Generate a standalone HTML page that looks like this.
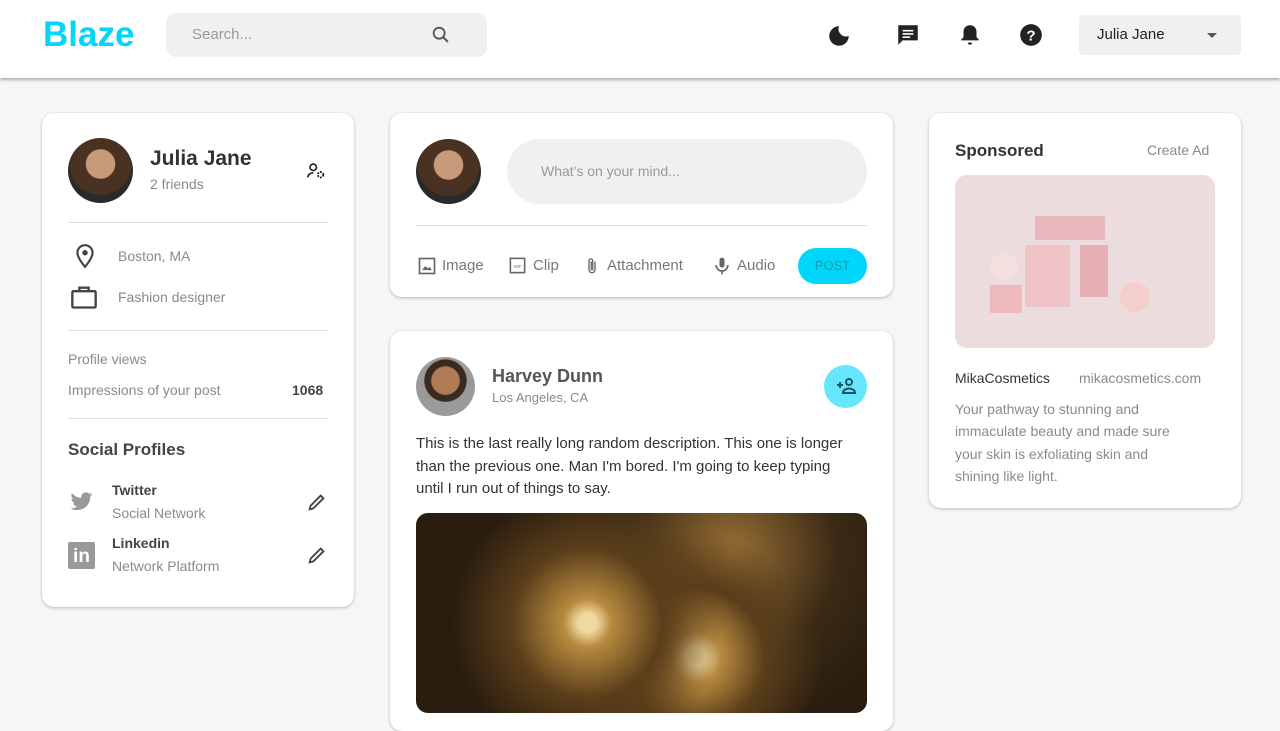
<!DOCTYPE html>
<html><head><meta charset="utf-8"><style>
*{box-sizing:border-box;margin:0;padding:0}
body{width:1280px;height:690px;overflow:hidden;background:#f6f6f6;font-family:"Liberation Sans",sans-serif;position:relative;color:#333}
.a{position:absolute}
.hdr{left:0;top:0;width:1280px;height:78px;background:#fff;box-shadow:0 2px 3px rgba(0,0,0,.3)}
.card{background:#fff;border-radius:12px;box-shadow:0 1px 3px rgba(0,0,0,.25)}
.g{color:#8a8a8a}
.hr{height:1px;background:#ddd}
.av{border-radius:50%}
</style></head><body>
<div class="a hdr"></div>
<div class="a" style="left:43px;top:15px;font-size:35px;font-weight:bold;color:#00d5fa">Blaze</div>
<div class="a" style="left:166px;top:13px;width:321px;height:44px;background:#f0f0f0;border-radius:10px"></div>
<div class="a g" style="left:192px;top:26px;font-size:15px;color:#999">Search...</div>
<svg class="a" style="left:430px;top:24px" width="22" height="22" viewBox="0 0 24 24"><circle cx="10" cy="10" r="6" fill="none" stroke="#555" stroke-width="2"/><path d="M14.5 14.5l5 5" stroke="#555" stroke-width="2.2"/></svg>
<svg class="a" style="left:826px;top:23px" width="26" height="26" viewBox="0 0 24 24"><path d="M12 3a9 9 0 1 0 9 9 7 7 0 0 1-9-9z" fill="#222"/></svg>
<svg class="a" style="left:895px;top:22px" width="26" height="26" viewBox="0 0 24 24"><path d="M3 3h18v14H7l-4 4z" fill="#222"/><path d="M7 8h10M7 11h10M7 14h7" stroke="#fff" stroke-width="1.5"/></svg>
<svg class="a" style="left:957px;top:22px" width="26" height="26" viewBox="0 0 24 24"><path d="M12 3c-3.5 0-6 2.5-6 6v5l-2 2v1h16v-1l-2-2V9c0-3.5-2.5-6-6-6zM10 19a2 2 0 0 0 4 0z" fill="#222"/></svg>
<svg class="a" style="left:1018px;top:22px" width="26" height="26" viewBox="0 0 24 24"><circle cx="12" cy="12" r="10" fill="#222"/><text x="12" y="17" font-size="14" font-weight="bold" fill="#fff" text-anchor="middle" font-family="Liberation Sans">?</text></svg>
<div class="a" style="left:1079px;top:15px;width:162px;height:40px;background:#f0f0f0;border-radius:4px"></div>
<div class="a" style="left:1097px;top:26px;font-size:15px;color:#222">Julia Jane</div>
<div class="a" style="left:1207px;top:33px;border:5px solid transparent;border-top-color:#555"></div>

<!-- left card -->
<div class="a card" style="left:42px;top:113px;width:312px;height:494px"></div>
<div class="a av" style="left:68px;top:138px;width:65px;height:65px;background:radial-gradient(circle at 50% 40%,#c99a7a 0 28%,#4a3222 30% 60%,#2a2a2a 62%)"></div>
<div class="a" style="left:150px;top:147px;font-size:21px;font-weight:bold;color:#333">Julia Jane</div>
<div class="a g" style="left:150px;top:176px;font-size:14px">2 friends</div>
<svg class="a" style="left:305px;top:160px" width="22" height="22" viewBox="0 0 24 24"><circle cx="9" cy="8" r="3.5" fill="none" stroke="#222" stroke-width="1.8"/><path d="M3 19c0-3 3-5 6-5" fill="none" stroke="#222" stroke-width="1.8"/><circle cx="17" cy="16" r="3" fill="none" stroke="#222" stroke-width="2" stroke-dasharray="2 1.3"/></svg>
<div class="a hr" style="left:68px;top:222px;width:260px"></div>
<svg class="a" style="left:72px;top:242px" width="26" height="28" viewBox="0 0 24 24"><path d="M12 2a7 7 0 0 0-7 7c0 5 7 13 7 13s7-8 7-13a7 7 0 0 0-7-7z" fill="none" stroke="#444" stroke-width="2"/><circle cx="12" cy="9" r="2.5" fill="#444"/></svg>
<div class="a g" style="left:118px;top:248px;font-size:14px">Boston, MA</div>
<svg class="a" style="left:69px;top:283px" width="30" height="28" viewBox="0 0 24 24"><rect x="2" y="7" width="20" height="14" rx="1" fill="none" stroke="#444" stroke-width="2"/><path d="M8 7V4h8v3" fill="none" stroke="#444" stroke-width="2"/></svg>
<div class="a g" style="left:118px;top:289px;font-size:14px">Fashion designer</div>
<div class="a hr" style="left:68px;top:330px;width:260px"></div>
<div class="a g" style="left:68px;top:351px;font-size:14px">Profile views</div>
<div class="a g" style="left:68px;top:382px;font-size:14px">Impressions of your post</div>
<div class="a" style="left:292px;top:382px;font-size:14px;font-weight:bold;color:#444">1068</div>
<div class="a hr" style="left:68px;top:418px;width:260px"></div>
<div class="a" style="left:68px;top:440px;font-size:17px;font-weight:bold;color:#444">Social Profiles</div>
<svg class="a" style="left:68px;top:490px" width="27" height="24" viewBox="0 0 24 24"><path d="M23 4.5a9 9 0 0 1-2.6.7 4.5 4.5 0 0 0 2-2.5 9 9 0 0 1-2.9 1.1A4.5 4.5 0 0 0 11.8 7.9 12.8 12.8 0 0 1 2.5 3.2a4.5 4.5 0 0 0 1.4 6 4.5 4.5 0 0 1-2-.6 4.5 4.5 0 0 0 3.6 4.5 4.5 4.5 0 0 1-2 .1 4.5 4.5 0 0 0 4.2 3.1A9 9 0 0 1 1 18.2 12.8 12.8 0 0 0 7.9 20c8.3 0 12.8-6.9 12.8-12.8v-.6A9 9 0 0 0 23 4.5z" fill="#999"/></svg>
<div class="a" style="left:112px;top:482px;font-size:14px;font-weight:bold;color:#444">Twitter</div>
<div class="a g" style="left:112px;top:505px;font-size:14px">Social Network</div>
<svg class="a" style="left:306px;top:491px" width="22" height="22" viewBox="0 0 24 24"><path d="M4 20l1-4L16 5l3 3L8 19z" fill="none" stroke="#444" stroke-width="2"/></svg>
<div class="a" style="left:68px;top:542px;width:27px;height:27px;background:#999;border-radius:2px;color:#fff;font-weight:bold;font-size:19px;line-height:29px;text-align:center">in</div>
<div class="a" style="left:112px;top:535px;font-size:14px;font-weight:bold;color:#444">Linkedin</div>
<div class="a g" style="left:112px;top:558px;font-size:14px">Network Platform</div>
<svg class="a" style="left:306px;top:544px" width="22" height="22" viewBox="0 0 24 24"><path d="M4 20l1-4L16 5l3 3L8 19z" fill="none" stroke="#444" stroke-width="2"/></svg>

<!-- post box -->
<div class="a card" style="left:390px;top:113px;width:503px;height:184px"></div>
<div class="a av" style="left:416px;top:139px;width:65px;height:65px;background:radial-gradient(circle at 50% 40%,#c99a7a 0 28%,#4a3222 30% 60%,#2a2a2a 62%)"></div>
<div class="a" style="left:507px;top:139px;width:360px;height:65px;background:#f0f0f0;border-radius:33px"></div>
<div class="a" style="left:541px;top:163px;font-size:14px;color:#999">What's on your mind...</div>
<div class="a hr" style="left:416px;top:225px;width:451px"></div>
<svg class="a" style="left:417px;top:256px" width="20" height="20" viewBox="0 0 24 24"><rect x="3" y="3" width="18" height="18" fill="none" stroke="#666" stroke-width="2"/><path d="M6 17l4-5 3 3 2-2 3 4z" fill="#666"/></svg>
<div class="a" style="left:442px;top:257px;font-size:15px;color:#777">Image</div>
<svg class="a" style="left:508px;top:256px" width="19" height="19" viewBox="0 0 24 24"><rect x="3" y="3" width="18" height="18" fill="none" stroke="#666" stroke-width="2"/><text x="12" y="15" font-size="6" fill="#666" text-anchor="middle">GIF</text></svg>
<div class="a" style="left:533px;top:257px;font-size:15px;color:#777">Clip</div>
<svg class="a" style="left:583px;top:254px" width="18" height="24" viewBox="0 0 24 24"><path d="M16 6v11a4 4 0 0 1-8 0V5a2.5 2.5 0 0 1 5 0v11a1 1 0 0 1-2 0V6" fill="none" stroke="#666" stroke-width="1.8"/></svg>
<div class="a" style="left:607px;top:257px;font-size:15px;color:#777">Attachment</div>
<svg class="a" style="left:712px;top:254px" width="20" height="24" viewBox="0 0 24 24"><rect x="9" y="2" width="6" height="12" rx="3" fill="#666"/><path d="M5 11a7 7 0 0 0 14 0M12 18v4" fill="none" stroke="#666" stroke-width="2"/></svg>
<div class="a" style="left:737px;top:257px;font-size:15px;color:#777">Audio</div>
<div class="a" style="left:798px;top:248px;width:69px;height:36px;background:#00d5fa;border-radius:18px;color:#1a9ab0;font-size:13px;line-height:36px;text-align:center">POST</div>

<!-- feed post -->
<div class="a card" style="left:390px;top:331px;width:503px;height:400px"></div>
<div class="a av" style="left:416px;top:357px;width:59px;height:59px;background:radial-gradient(circle at 50% 40%,#b07a55 0 30%,#3a2a20 32% 45%,#9a9a9a 47%)"></div>
<div class="a" style="left:492px;top:366px;font-size:18px;font-weight:bold;color:#555">Harvey Dunn</div>
<div class="a g" style="left:492px;top:390px;font-size:13px">Los Angeles, CA</div>
<div class="a av" style="left:824px;top:365px;width:43px;height:43px;background:#66e6fc"></div>
<svg class="a" style="left:834px;top:374px" width="24" height="24" viewBox="0 0 24 24"><circle cx="15" cy="8" r="3" fill="none" stroke="#1b5560" stroke-width="2"/><path d="M9 19c0-3 3-4.5 6-4.5s6 1.5 6 4.5z M3 11h6M6 8v6" fill="none" stroke="#1b5560" stroke-width="2"/></svg>
<div class="a" style="left:416px;top:433px;width:440px;font-size:15px;line-height:22.5px;color:#333">This is the last really long random description. This one is longer than the previous one. Man I'm bored. I'm going to keep typing until I run out of things to say.</div>
<div class="a" style="left:416px;top:513px;width:451px;height:200px;border-radius:12px;background:radial-gradient(circle at 38% 55%,#f0d9a0 0 3%,#b88a40 8%,#5a3e1a 25%,transparent 45%),radial-gradient(circle at 62% 72%,#f0d9a0 0 3%,#b88a40 8%,#5a3e1a 22%,transparent 40%),radial-gradient(circle at 70% 20%,#9a7035 0,#3a2a15 30%,transparent 50%),#2a1d10"></div>

<!-- sponsored -->
<div class="a card" style="left:929px;top:113px;width:312px;height:395px"></div>
<div class="a" style="left:955px;top:141px;font-size:17px;font-weight:bold;color:#333">Sponsored</div>
<div class="a g" style="left:1147px;top:142px;font-size:14px">Create Ad</div>
<div class="a" style="left:955px;top:175px;width:260px;height:173px;border-radius:12px;background:#ecdcdd"></div>
<div class="a" style="left:1035px;top:216px;width:70px;height:24px;background:#e8b8bc;border-radius:2px"></div>
<div class="a" style="left:1025px;top:245px;width:45px;height:62px;background:#f0c4c6"></div>
<div class="a" style="left:1080px;top:245px;width:28px;height:52px;background:#e8b0b4"></div>
<div class="a av" style="left:990px;top:252px;width:28px;height:28px;background:#f5dede"></div>
<div class="a" style="left:990px;top:285px;width:32px;height:28px;background:#eebabd"></div>
<div class="a av" style="left:1120px;top:282px;width:30px;height:30px;background:#f3cfcc"></div>
<div class="a" style="left:955px;top:370px;font-size:14px;color:#333">MikaCosmetics</div>
<div class="a g" style="left:1079px;top:370px;font-size:14px">mikacosmetics.com</div>
<div class="a g" style="left:955px;top:398px;width:240px;font-size:14px;line-height:22.3px">Your pathway to stunning and immaculate beauty and made sure your skin is exfoliating skin and shining like light.</div>
</body></html>
